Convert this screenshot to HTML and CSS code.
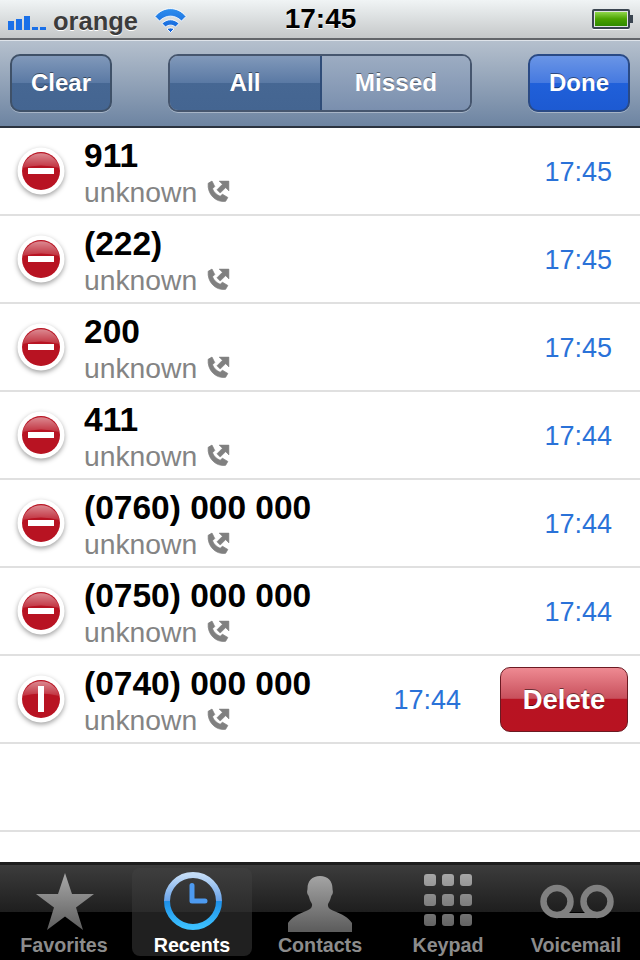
FILE: index.html
```html
<!DOCTYPE html>
<html lang="en">
<head>
<meta charset="utf-8">
<title>Recents</title>
<link rel="stylesheet" href="styles.css">
</head>
<body>
<svg class="defs" width="0" height="0" aria-hidden="true">
  <defs>
    <linearGradient id="gloss" x1="0" y1="0" x2="0" y2="1">
      <stop offset="0" stop-color="#fff" stop-opacity=".5"/><stop offset="1" stop-color="#fff" stop-opacity=".12"/>
    </linearGradient>
    <linearGradient id="gray" gradientUnits="userSpaceOnUse" x1="0" y1="5" x2="0" y2="62">
      <stop offset="0" stop-color="#a8a8a8"/><stop offset="1" stop-color="#5e5e5e"/>
    </linearGradient>
    <linearGradient id="ring" x1="0" y1="0" x2="0" y2="1">
      <stop offset="0" stop-color="#c4dcf6"/><stop offset=".49" stop-color="#6aa4ea"/><stop offset=".5" stop-color="#1d8fe8"/><stop offset="1" stop-color="#3cc0ff"/>
    </linearGradient>
    <linearGradient id="wifi" gradientUnits="userSpaceOnUse" x1="0" y1="1" x2="0" y2="26">
      <stop offset="0" stop-color="#2f8fee"/><stop offset="1" stop-color="#0f5fd8"/>
    </linearGradient>
    <symbol id="minus" viewBox="0 0 48 48">
      <circle cx="24" cy="24" r="23.5" fill="#fff"/>
      <circle cx="24" cy="24" r="19" fill="#b81322"/>
      <path d="M5.500 21a19 19 0 0 1 37 0Q24 16 5.500 21Z" fill="url(#gloss)"/>
      <rect x="11" y="21" width="26" height="6" fill="#fff"/>
    </symbol>
    <symbol id="minus-open" viewBox="0 0 48 48">
      <circle cx="24" cy="24" r="23.5" fill="#fff"/>
      <circle cx="24" cy="24" r="19" fill="#b81322"/>
      <path d="M5.500 21a19 19 0 0 1 37 0Q24 16 5.500 21Z" fill="url(#gloss)"/>
      <rect x="21" y="11" width="6" height="26" fill="#fff"/>
    </symbol>
    <symbol id="call" viewBox="0 0 22 22">
      <path d="M2 3 5.500 1 8 6 6 8C7 11 9 13 13 15L15 13 20 16 18 19.500C9 21 1 13 2 3Z" fill="#808080" stroke="#808080" stroke-width=".7" stroke-linejoin="round"/>
      <path d="M12 1h9v9l-3-3-5 5-3-3 5-5Z" fill="#808080" stroke="#808080" stroke-width=".5" stroke-linejoin="round"/>
    </symbol>
  </defs>
</svg>
<div class="phone">
  <header class="status">
    <div class="status-left">
      <svg class="signal" width="38" height="14" viewBox="0 0 38 14" aria-hidden="true">
        <rect x="0" y="5" width="6" height="9" fill="#1a70e8"/>
        <rect x="8" y="3" width="6" height="11" fill="#1a70e8"/>
        <rect x="16" y="0" width="6" height="14" fill="#1a70e8"/>
        <rect x="24" y="11" width="6" height="3" fill="#1a70e8"/>
        <rect x="32" y="11" width="6" height="3" fill="#1a70e8"/>
      </svg>
      <span class="carrier">orange</span>
      <svg class="wifi" width="33" height="26" viewBox="0 0 33 26" aria-hidden="true">
        <g fill="url(#wifi)" stroke="#fff" stroke-width=".9">
          <path d="M1 9.500C9-1 24-1 32 9.500L27.500 14C21 7.500 12 7.500 5.500 14Z"/>
          <path d="M8 16.500C13 11.500 20 11.500 25 16.500L21.500 20C18.500 17.500 14.500 17.500 11.500 20Z"/>
          <path d="M16.500 25.500 13 22C15 20.500 18 20.500 20 22Z"/>
        </g>
      </svg>
    </div>
    <div class="clock">17:45</div>
    <div class="status-right">
      <div class="battery"><div class="battery-fill"></div></div><div class="battery-tip"></div>
    </div>
  </header>

  <nav class="navbar">
    <button class="btn">Clear</button>
    <div class="segments">
      <button class="seg seg-on">All</button>
      <button class="seg">Missed</button>
    </div>
    <button class="btn btn-done">Done</button>
  </nav>

  <main class="list">
    <div class="row">
      <svg class="del" width="48" height="48" aria-hidden="true"><use href="#minus"/></svg>
      <div class="info"><div class="name">911</div><div class="sub">unknown <svg class="call" width="24" height="24" aria-hidden="true"><use href="#call"/></svg></div></div>
      <div class="time">17:45</div>
    </div>
    <div class="row">
      <svg class="del" width="48" height="48" aria-hidden="true"><use href="#minus"/></svg>
      <div class="info"><div class="name">(222)</div><div class="sub">unknown <svg class="call" width="24" height="24" aria-hidden="true"><use href="#call"/></svg></div></div>
      <div class="time">17:45</div>
    </div>
    <div class="row">
      <svg class="del" width="48" height="48" aria-hidden="true"><use href="#minus"/></svg>
      <div class="info"><div class="name">200</div><div class="sub">unknown <svg class="call" width="24" height="24" aria-hidden="true"><use href="#call"/></svg></div></div>
      <div class="time">17:45</div>
    </div>
    <div class="row">
      <svg class="del" width="48" height="48" aria-hidden="true"><use href="#minus"/></svg>
      <div class="info"><div class="name">411</div><div class="sub">unknown <svg class="call" width="24" height="24" aria-hidden="true"><use href="#call"/></svg></div></div>
      <div class="time">17:44</div>
    </div>
    <div class="row">
      <svg class="del" width="48" height="48" aria-hidden="true"><use href="#minus"/></svg>
      <div class="info"><div class="name">(0760) 000 000</div><div class="sub">unknown <svg class="call" width="24" height="24" aria-hidden="true"><use href="#call"/></svg></div></div>
      <div class="time">17:44</div>
    </div>
    <div class="row">
      <svg class="del" width="48" height="48" aria-hidden="true"><use href="#minus"/></svg>
      <div class="info"><div class="name">(0750) 000 000</div><div class="sub">unknown <svg class="call" width="24" height="24" aria-hidden="true"><use href="#call"/></svg></div></div>
      <div class="time">17:44</div>
    </div>
    <div class="row row-open">
      <svg class="del" width="48" height="48" aria-hidden="true"><use href="#minus-open"/></svg>
      <div class="info"><div class="name">(0740) 000 000</div><div class="sub">unknown <svg class="call" width="24" height="24" aria-hidden="true"><use href="#call"/></svg></div></div>
      <div class="time">17:44</div>
      <button class="delete">Delete</button>
    </div>
    <div class="row"></div>
  </main>

  <footer class="tabbar">
    <div class="tab">
      <svg class="tab-icon" width="120" height="66" viewBox="0 0 120 66" aria-hidden="true">
        <path d="M61 5 68 26H90L72 39.500 79 62 61 48.500 43 62 50 39.500 32 26H54Z" fill="url(#gray)"/>
      </svg>
      <span class="tab-label">Favorites</span>
    </div>
    <div class="tab tab-on">
      <svg class="tab-icon" width="120" height="66" viewBox="0 0 120 66" aria-hidden="true">
        <circle cx="61" cy="33" r="26" fill="none" stroke="url(#ring)" stroke-width="6"/>
        <path d="M60 17.500V33H73" fill="none" stroke="#4d9af0" stroke-width="5" stroke-linecap="round" stroke-linejoin="round"/>
      </svg>
      <span class="tab-label">Recents</span>
    </div>
    <div class="tab">
      <svg class="tab-icon" width="120" height="66" viewBox="0 0 120 66" aria-hidden="true">
        <path d="M60 8c8 0 12.500 5 12.500 12.500 0 2 .7 2.500.3 4.500-.4 2-1.300 2-1.800 4-.6 3-2 5-3 7-.5 3 1 5 6 7 8 3 15 7 18 12v9H28v-9c3-5 10-9 18-12 5-2 6.500-4 6-7-1-2-2.400-4-3-7-.5-2-1.400-2-1.800-4-.4-2 .3-2.500.3-4.500C47.500 13 52 8 60 8Z" fill="url(#gray)"/>
      </svg>
      <span class="tab-label">Contacts</span>
    </div>
    <div class="tab">
      <svg class="tab-icon" width="120" height="66" viewBox="0 0 120 66" aria-hidden="true">
        <g fill="url(#gray)">
          <rect x="36" y="6" width="12" height="12" rx="3"/><rect x="54" y="6" width="12" height="12" rx="3"/><rect x="72" y="6" width="12" height="12" rx="3"/>
          <rect x="36" y="26" width="12" height="12" rx="3"/><rect x="54" y="26" width="12" height="12" rx="3"/><rect x="72" y="26" width="12" height="12" rx="3"/>
          <rect x="36" y="46" width="12" height="12" rx="3"/><rect x="54" y="46" width="12" height="12" rx="3"/><rect x="72" y="46" width="12" height="12" rx="3"/>
        </g>
      </svg>
      <span class="tab-label">Keypad</span>
    </div>
    <div class="tab">
      <svg class="tab-icon" width="120" height="66" viewBox="0 0 120 66" aria-hidden="true">
        <g fill="none" stroke="#808080">
          <circle cx="41" cy="33.500" r="13.500" stroke-width="6.500"/>
          <circle cx="81" cy="33.500" r="13.500" stroke-width="6.500"/>
          <path d="M41 47.500H81" stroke-width="5"/>
        </g>
      </svg>
      <span class="tab-label">Voicemail</span>
    </div>
  </footer>
</div>
</body>
</html>
```
FILE: styles.css
```css
* { box-sizing: border-box; }
html, body { margin: 0; padding: 0; }
body { width: 640px; height: 960px; overflow: hidden; background: #fff; font-family: "Liberation Sans", Arial, sans-serif; }
.defs { display: block; height: 0; width: 0; }
.phone { width: 640px; height: 960px; display: flex; flex-direction: column; }

.status { height: 40px; flex: none; display: grid; grid-template-columns: 1fr auto 1fr; align-items: center; padding: 0 7px 0 8px; background: linear-gradient(#f0f4f5, #c5c8c9); border-bottom: 2px solid #63666a; }
.status-left { display: flex; align-items: center; }
.signal { flex: none; margin-top: 7px; }
.carrier { margin: 4px 0 0 7px; font-size: 25.500px; font-weight: 700; color: #3c3c3c; text-shadow: 0 1px 0 #fff; }
.wifi { flex: none; margin: 2px 0 0 16px; }
.clock { font-size: 28px; font-weight: 700; color: #000; text-shadow: 0 1px 0 #fff; }
.status-right { display: flex; align-items: center; justify-content: flex-end; }
.battery { width: 38px; height: 20px; border: 2px solid #3a4550; border-radius: 2px; padding: 1px; background: #dfe3e3; box-shadow: 0 1px 0 #fff; }
.battery-fill { height: 100%; background: linear-gradient(#8fd64a, #4aa200 50%, #2f8a00); }
.battery-tip { width: 3px; height: 8px; background: #3a4550; }

.navbar { height: 88px; flex: none; display: flex; align-items: center; justify-content: space-between; padding: 0 10px 1px; background: linear-gradient(#b5c0cd, #6d84a2); border-top: 1px solid #dfe4ea; border-bottom: 2px solid #2b333f; }
.btn { width: 102px; height: 58px; padding: 0; font: 700 24px "Liberation Sans", Arial, sans-serif; color: #fff; text-shadow: 0 -1px 0 rgba(0,0,0,.45); border: 2px solid #3f5168; border-radius: 10px; background: linear-gradient(#8199ba, #5a79a4 50%, #466793 50%, #446591); box-shadow: 0 1px 0 rgba(255,255,255,.35); }
.btn-done { border-color: #2a4a85; background: linear-gradient(#6a95e6, #4579e0 50%, #2060da 50%, #1d5ad2); }
.segments { width: 304px; height: 58px; display: flex; border: 2px solid #46566e; border-radius: 10px; overflow: hidden; box-shadow: 0 1px 0 rgba(255,255,255,.35); }
.seg { flex: 1; padding: 0; border: 0; font: 700 24.300px "Liberation Sans", Arial, sans-serif; color: #fff; text-shadow: 0 -1px 0 rgba(0,0,0,.45); background: linear-gradient(#9cacc2, #7a8fae); }
.seg-on { flex: none; width: 152px; border-right: 2px solid #2f4c78; background: linear-gradient(#8199ba, #5a79a4 50%, #466793 50%, #446591); }

.list { flex: 1; min-height: 0; }
.row { height: 88px; display: flex; align-items: center; padding: 0 28px 0 17px; background: #fff; border-bottom: 2px solid #e0e0e0; }
.del { flex: none; margin-right: 19px; filter: drop-shadow(0 2px 2.5px rgba(0,0,0,.38)); }
.info { flex: 1; min-width: 0; margin-top: 6px; }
.name { font-size: 33.500px; line-height: 38px; font-weight: 700; color: #000; white-space: nowrap; }
.sub { display: flex; align-items: center; gap: 9px; margin-bottom: 2px; font-size: 28.300px; line-height: 34px; color: #848484; }
.time { margin-top: 2px; font-size: 27px; color: #2a72d8; }
.row-open { padding-right: 12px; }
.delete { flex: none; width: 128px; height: 65px; margin: 1px 0 0 39px; padding: 0; font: 700 27.500px "Liberation Sans", Arial, sans-serif; color: #fff; text-shadow: 0 -1px 0 rgba(0,0,0,.5); border: 1px solid #6b1a22; border-radius: 10px; background: linear-gradient(#ee8a92, #c8505c 48%, #b81322 50%, #b81321); }

.tabbar { height: 98px; flex: none; display: grid; grid-template-columns: repeat(5, 128px); padding-top: 3px; border-top: 3px solid #1e1e1e; background: linear-gradient(#3c3c3c, #1e1e1e 47px, #000 47px); }
.tab { display: flex; flex-direction: column; align-items: center; height: 88px; margin: 0 4px; border-radius: 8px; }
.tab-on { background: linear-gradient(#3e3e3e, #2b2b2b 44px, #202020 44px); }
.tab-icon { flex: none; }
.tab-label { font-size: 19.700px; line-height: 22px; font-weight: 700; color: #8c8c8c; white-space: nowrap; }
.tab-on .tab-label { color: #fff; }
```
